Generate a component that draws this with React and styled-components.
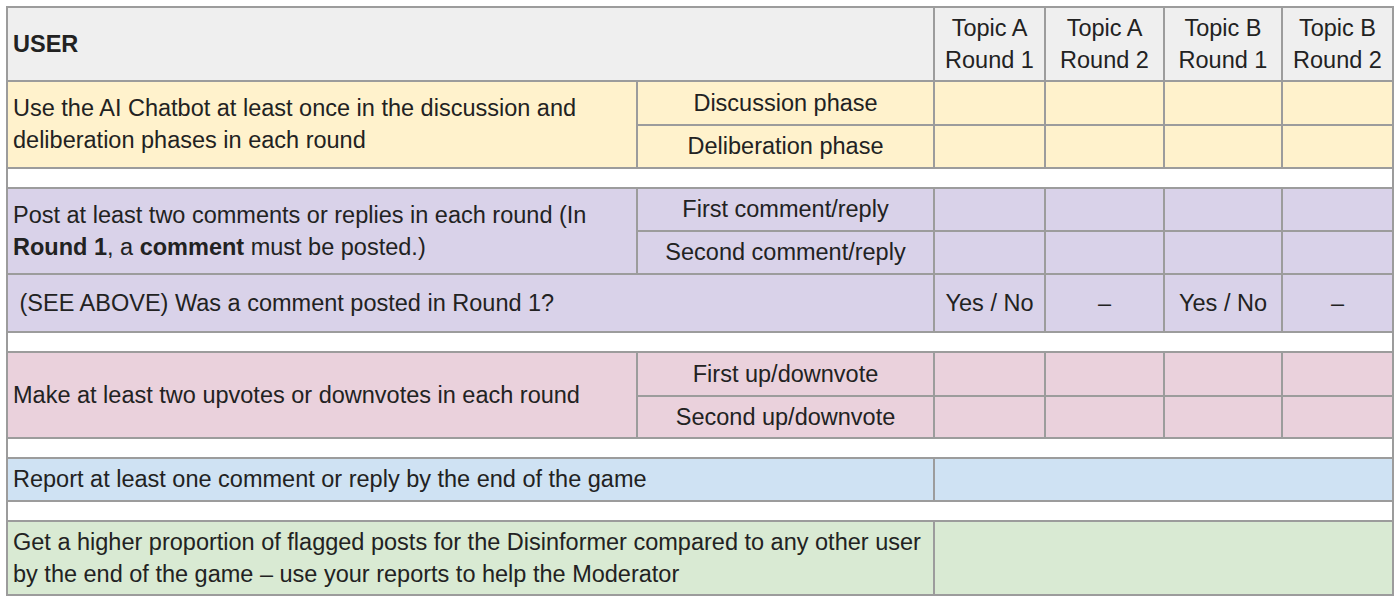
import React from 'react';
import styled, { createGlobalStyle } from 'styled-components';

const GlobalStyle = createGlobalStyle`
	body {
		margin: 0;
		background: #ffffff;
		font-family: 'Liberation Sans', Arial, sans-serif;
	}
`;

const tones = {
	head: '#efefef',
	yellow: '#fff2cc',
	purple: '#d9d2e9',
	pink: '#ead1dc',
	blue: '#cfe2f3',
	green: '#d9ead3',
	blank: '#ffffff',
};

const Page = styled.div`
	padding: 6px 6px;
`;

const Sheet = styled.table`
	border-collapse: collapse;
	table-layout: fixed;
	width: 1386px;
	color: #222222;
	font-size: 23.5px;
	line-height: 32px;
`;

const Col = styled.col`
	width: ${(p) => p.$w}px;
`;

const Row = styled.tr`
	height: ${(p) => p.$h}px;
`;

const Cell = styled.td`
	border: 2px solid #9c9c9c;
	background: ${(p) => tones[p.$tone]};
	padding: 0 5px 1px;
	vertical-align: middle;
	text-align: ${(p) => (p.$center ? 'center' : 'left')};
	font-weight: ${(p) => (p.$bold ? 700 : 400)};
	white-space: nowrap;
	overflow: hidden;
`;

const Blank = styled.td`
	border: 2px solid #9c9c9c;
	background: #ffffff;
	padding: 0;
`;

const Strong = styled.b`
	font-weight: 700;
`;

const rounds = [
	['Topic A', 'Round 1'],
	['Topic A', 'Round 2'],
	['Topic B', 'Round 1'],
	['Topic B', 'Round 2'],
];

const Marks = ({ tone, values = ['', '', '', ''] }) =>
	values.map((v, i) => (
		<Cell key={i} $tone={tone} $center>
			{v}
		</Cell>
	));

const Spacer = () => (
	<Row $h={20}>
		<Blank colSpan={6} />
	</Row>
);

const App = () => {
	return (
		<Page>
			<GlobalStyle />
			<Sheet>
				<colgroup>
					<Col $w={630} />
					<Col $w={297} />
					<Col $w={111} />
					<Col $w={119} />
					<Col $w={118} />
					<Col $w={111} />
				</colgroup>
				<tbody>
					<Row $h={74}>
						<Cell $tone="head" $bold colSpan={2}>
							USER
						</Cell>
						{rounds.map(([topic, round]) => (
							<Cell key={topic + round} $tone="head" $center>
								{topic}
								<br />
								{round}
							</Cell>
						))}
					</Row>

					<Row $h={44}>
						<Cell $tone="yellow" rowSpan={2}>
							Use the AI Chatbot at least once in the discussion and
							<br />
							deliberation phases in each round
						</Cell>
						<Cell $tone="yellow" $center>
							Discussion phase
						</Cell>
						<Marks tone="yellow" />
					</Row>
					<Row $h={43}>
						<Cell $tone="yellow" $center>
							Deliberation phase
						</Cell>
						<Marks tone="yellow" />
					</Row>

					<Spacer />

					<Row $h={43}>
						<Cell $tone="purple" rowSpan={2}>
							Post at least two comments or replies in each round (In
							<br />
							<Strong>Round 1</Strong>, a <Strong>comment</Strong> must be posted.)
						</Cell>
						<Cell $tone="purple" $center>
							First comment/reply
						</Cell>
						<Marks tone="purple" />
					</Row>
					<Row $h={43}>
						<Cell $tone="purple" $center>
							Second comment/reply
						</Cell>
						<Marks tone="purple" />
					</Row>
					<Row $h={58}>
						<Cell $tone="purple" colSpan={2}>
							&nbsp;(SEE ABOVE) Was a comment posted in Round 1?
						</Cell>
						<Marks tone="purple" values={['Yes / No', '–', 'Yes / No', '–']} />
					</Row>

					<Spacer />

					<Row $h={44}>
						<Cell $tone="pink" rowSpan={2}>
							Make at least two upvotes or downvotes in each round
						</Cell>
						<Cell $tone="pink" $center>
							First up/downvote
						</Cell>
						<Marks tone="pink" />
					</Row>
					<Row $h={42}>
						<Cell $tone="pink" $center>
							Second up/downvote
						</Cell>
						<Marks tone="pink" />
					</Row>

					<Spacer />

					<Row $h={43}>
						<Cell $tone="blue" colSpan={2}>
							Report at least one comment or reply by the end of the game
						</Cell>
						<Cell $tone="blue" colSpan={4} />
					</Row>

					<Spacer />

					<Row $h={74}>
						<Cell $tone="green" colSpan={2}>
							Get a higher proportion of flagged posts for the Disinformer compared to any other user
							<br />
							by the end of the game – use your reports to help the Moderator
						</Cell>
						<Cell $tone="green" colSpan={4} />
					</Row>
				</tbody>
			</Sheet>
		</Page>
	);
};

export default App;
